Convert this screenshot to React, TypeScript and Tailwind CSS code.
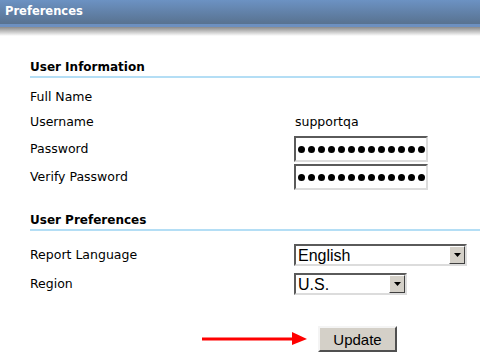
import React from 'react';

const insetBox =
    'border-2 border-t-[#5a5a5a] border-l-[#5a5a5a] border-b-[#dcdcdc] border-r-[#dcdcdc] bg-white';

const PasswordBox: React.FC = () => (
    <div className={`${insetBox} w-[134px] h-[26px] flex items-center pl-[2px] gap-[3px]`}>
        {Array.from({ length: 13 }).map((_, i) => (
            <div key={i} className="w-[7px] h-[7px] rounded-full bg-black shrink-0" />
        ))}
    </div>
);

const SelectBox: React.FC<{ value: string; width: string }> = ({ value, width }) => (
    <div className={`${insetBox} ${width} h-[22px] flex items-stretch`}>
        <span className="flex-1 pl-[2px] text-[16px] leading-[19px] font-['Liberation_Sans',Arial,sans-serif] text-black">
            {value}
        </span>
        <div className="w-[16px] bg-[#d4d0c8] border border-t-white border-l-white border-r-[#404040] border-b-[#404040] flex items-center justify-center">
            <svg width="7" height="4" viewBox="0 0 7 4">
                <polygon points="0,0 7,0 3.5,4" fill="#000" />
            </svg>
        </div>
    </div>
);

const Row: React.FC<{ label: string; h: string; children?: React.ReactNode }> = ({ label, h, children }) => (
    <div className={`flex items-center ${h}`}>
        <span className="w-[264px] shrink-0">{label}</span>
        {children}
    </div>
);

const SectionHeading: React.FC<{ title: string; mt: string }> = ({ title, mt }) => (
    <div className={`${mt} pl-[30px]`}>
        <div className="font-bold text-[12px] leading-[16px] pb-[1px] border-b-2 border-[#b4def5] text-black">
            {title}
        </div>
    </div>
);

export default function App() {
    return (
        <div className="w-[480px] h-[360px] bg-white overflow-hidden font-['DejaVu_Sans',Verdana,sans-serif] text-[12.5px] text-black">
            {/* Header */}
            <div className="h-[24px] bg-gradient-to-b from-[#6c92c3] to-[#587290] flex items-center pl-[5px]">
                <span className="text-white font-bold text-[11.5px]">Preferences</span>
            </div>
            <div className="h-[3px] bg-[#6d90c0]" />
            <div className="h-[9px] bg-gradient-to-b from-[#8a8a8a] to-white" />

            {/* User Information */}
            <SectionHeading title="User Information" mt="mt-[23px]" />
            <div className="pl-[30px] mt-[7px]">
                <Row label="Full Name" h="h-[24px]" />
                <Row label="Username" h="h-[26px]">
                    <span className="pl-[1px]">supportqa</span>
                </Row>
                <Row label="Password" h="h-[28px]">
                    <PasswordBox />
                </Row>
                <Row label="Verify Password" h="h-[28px]">
                    <PasswordBox />
                </Row>
            </div>

            {/* User Preferences */}
            <SectionHeading title="User Preferences" mt="mt-[21px]" />
            <div className="pl-[30px] mt-[12px] flex flex-col gap-[5px]">
                <Row label="Report Language" h="h-[24px]">
                    <SelectBox value="English" width="w-[173px]" />
                </Row>
                <Row label="Region" h="h-[24px]">
                    <SelectBox value="U.S." width="w-[113px]" />
                </Row>
            </div>

            {/* Update */}
            <div className="mt-[30px] pl-[202px] flex items-center gap-[11px]">
                <svg width="105" height="14" viewBox="0 0 105 14">
                    <rect x="0" y="5.5" width="92" height="3" fill="#ff0000" />
                    <polygon points="90,0 105,7 90,13" fill="#ff0000" />
                </svg>
                <button className="w-[79px] h-[26px] bg-[#d4d0c8] border-2 border-t-[#f4f4f4] border-l-[#f4f4f4] border-r-[#505050] border-b-[#505050] text-[15px] font-['Liberation_Sans',Arial,sans-serif] text-black leading-none">
                    Update
                </button>
            </div>
        </div>
    );
}
